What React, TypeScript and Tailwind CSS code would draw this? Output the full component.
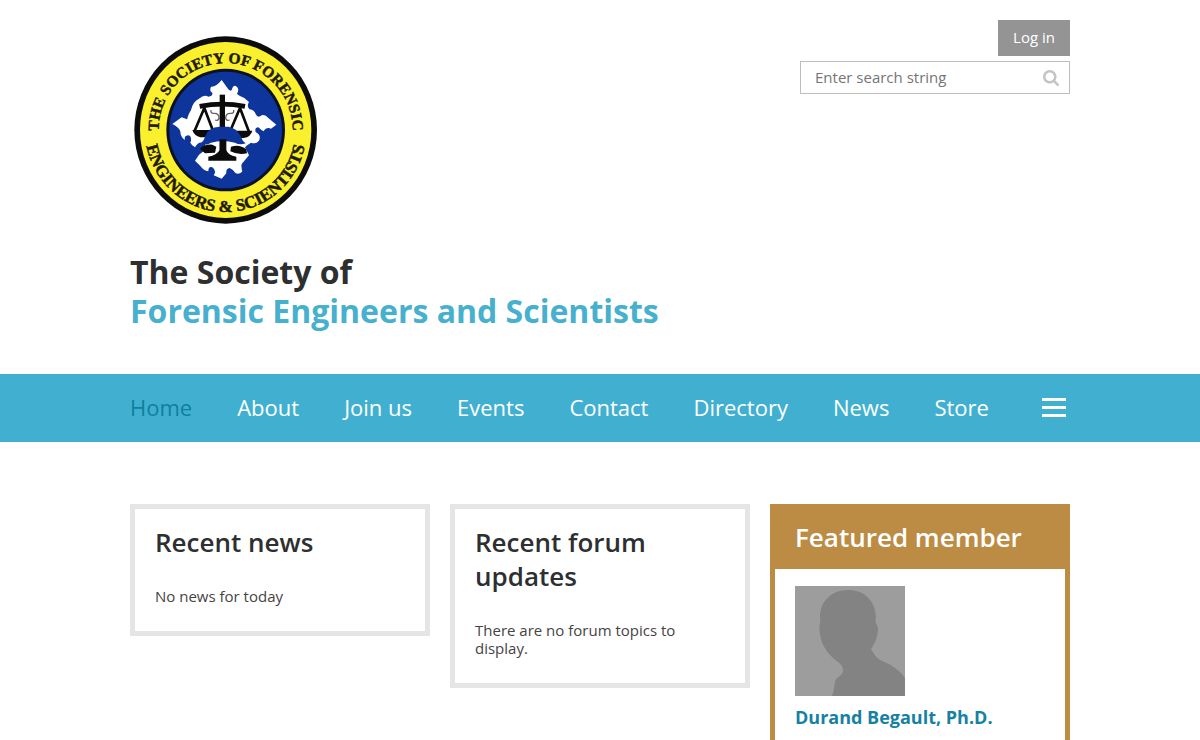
const navItems = ["Home", "About", "Join us", "Events", "Contact", "Directory", "News", "Store"];

function Logo() {
  return (
    <svg viewBox="0 0 600 600" className="block size-[200px]" role="img" aria-label="The Society of Forensic Engineers and Scientists">
      <defs>
        <path id="ring-top" d="M100 330 L101 300 A201 201 0 0 1 503 300 L504 330" />
        <path id="ring-bottom" d="M60 300 A242 246 0 0 0 544 300" />
      </defs>
      <ellipse cx="302" cy="300" rx="274" ry="281" fill="#0c0c0c" />
      <ellipse cx="302" cy="300" rx="257" ry="264" fill="#fbf02d" />
      <ellipse cx="302" cy="300" rx="178" ry="184" fill="#0c1222" />
      <ellipse cx="302" cy="300" rx="169" ry="175" fill="#0d359c" />
      <g fill="#1d1b05" stroke="#1d1b05" strokeWidth="1.5" fontFamily="Liberation Serif, serif" fontWeight="700" textAnchor="middle">
        <text fontSize="46">
          <textPath href="#ring-top" startOffset="50%">THE SOCIETY OF FORENSIC</textPath>
        </text>
        <text fontSize="51">
          <textPath href="#ring-bottom" startOffset="50%">ENGINEERS &amp; SCIENTISTS</textPath>
        </text>
      </g>
      <path
        fill="#fff"
        d="M290 150 L310 178 Q320 188 322 174 Q328 162 337 172 Q343 180 336 192 Q346 200 358 204 L372 216 Q364 228 374 238 Q388 240 392 252 Q398 266 410 256 Q420 252 430 264 L454 284 L438 296 Q424 290 416 304 Q408 300 400 292 Q388 292 392 306 Q410 316 402 332 Q392 344 378 338 Q364 346 360 352 L372 376 L350 402 Q348 412 352 424 Q346 434 332 430 Q324 418 314 414 Q302 416 304 430 L290 446 L266 436 Q276 422 262 412 Q250 408 250 424 Q236 422 226 408 L210 392 L222 374 L240 360 L240 342 Q222 330 210 352 Q200 346 196 338 Q202 322 192 316 Q176 316 180 330 Q166 322 166 304 Q160 290 142 282 L170 262 L186 268 Q190 252 198 240 Q204 214 222 206 Q238 192 250 200 Q264 200 262 188 Q252 184 258 170 Q272 172 290 150 Z"
      />
      <g fill="none" stroke="#0b0b0b" strokeLinejoin="round">
        <path strokeWidth="14" d="M224 229 Q292 216 360 229" />
        <path strokeWidth="8" d="M238 234 L209 302 M238 234 L264 302 M345 234 L316 302 M345 234 L373 308" />
        <path strokeWidth="4" stroke="#60636b" d="M258 240 Q256 252 268 250 Q282 250 282 264 Q280 274 270 270 M326 240 Q328 252 316 250 Q302 250 302 264 Q304 274 314 270" />
      </g>
      <g fill="#0b0b0b">
        <path d="M284 194 H300 V362 H284 Z" />
        <path d="M202 300 H270 Q264 320 240 322 H226 Q208 318 202 300 Z" />
        <path d="M314 302 H382 Q378 320 356 324 H336 Q320 318 314 302 Z" />
        <path d="M224 356 Q240 342 262 344 L274 350 L270 368 L240 370 Z" />
        <path d="M318 350 Q344 342 364 358 L366 370 Q340 376 316 364 Z" />
      </g>
      <path fill="#0d359c" d="M226 342 Q238 332 242 316 Q250 292 284 290 H310 Q336 294 348 320 Q352 334 362 340 Q344 346 330 338 Q292 328 258 338 Q244 348 226 342 Z" />
      <path fill="#0b0b0b" d="M284 328 H304 V360 Q308 376 334 380 V392 H250 V380 Q276 376 284 360 Z" />
    </svg>
  );
}

function SearchIcon() {
  return (
    <svg viewBox="0 0 1664 1664" className="block size-4" fill="#c4c4c4" aria-hidden="true">
      <path d="M1152 704q0-185-131.500-316.500T704 256 387.500 387.500 256 704t131.500 316.500T704 1152t316.500-131.500T1152 704zm512 832q0 52-38 90t-90 38q-54 0-90-38l-343-342q-179 124-399 124-143 0-273.500-55.500t-225-150-150-225T0 704t55.500-273.500 150-225 225-150T704 0t273.500 55.500 225 150 150 225T1408 704q0 220-124 399l343 343q37 37 37 90z" />
    </svg>
  );
}

function Avatar() {
  return (
    <svg viewBox="0 0 110 110" className="block size-[110px]" role="img" aria-label="No photo">
      <path fill="#9d9d9d" d="M0 0 H110 V110 H0 Z" />
      <path
        fill="#838383"
        d="M53 4 C36 4 25 16 25 31 C26 35 24 39 24.500 44 C25 55 30 64 36 70 C42 76 48 78 48 84 C48 91 41 90 40 96 C39 101 39 105 37 110 H110 V92 C104 83 95 78 85 74 C80 71 79 67 76 63 C80 58 83 49 83 43 C83 39 79 36 81 31 C80 14 69 4 53 4 Z"
      />
    </svg>
  );
}

function Header() {
  return (
    <header className="mx-auto flex max-w-[940px] items-start justify-between pb-11">
      <div>
        <div className="-ml-[5px] pt-[30px]">
          <Logo />
        </div>
        <h1 className="mt-[22px] text-[32px] leading-[39px] font-bold text-[#2d2f31]">
          The Society of
          <span className="block text-[#46b0ce]">Forensic Engineers and Scientists</span>
        </h1>
      </div>
      <div className="flex w-[270px] flex-col items-end gap-[5px] pt-5">
        <button type="button" className="h-9 bg-[#949494] px-[15px] pb-0.5 text-[15px] text-white">
          Log in
        </button>
        <form role="search" className="flex h-[33px] w-full items-center border border-[#bdbdbd] pr-2.5 pl-3.5">
          <input
            type="text"
            aria-label="Search"
            placeholder="Enter search string"
            className="min-w-0 flex-1 text-[15px] text-[#666] outline-none placeholder:text-[#757575]"
          />
          <button type="submit" aria-label="Search">
            <SearchIcon />
          </button>
        </form>
      </div>
    </header>
  );
}

function Nav() {
  return (
    <nav className="bg-[#41b0d0]">
      <div className="mx-auto flex h-[68px] max-w-[940px] items-center justify-between pr-1 pb-0.5">
        <div className="flex gap-[45px]">
          {navItems.map((item) => (
            <a key={item} href="#" className={item === "Home" ? "text-[22px] text-[#0e7f9f]" : "text-[22px] text-white"}>
              {item}
            </a>
          ))}
        </div>
        <button type="button" aria-label="More" className="flex w-6 flex-col gap-[5px]">
          <span className="h-[3px] bg-white" />
          <span className="h-[3px] bg-white" />
          <span className="h-[3px] bg-white" />
        </button>
      </div>
    </nav>
  );
}

function Gadget({ title, text }: { title: string; text: string }) {
  return (
    <section className="border-5 border-[#e5e5e5] px-5 pt-4 pb-[26px]">
      <h2 className="text-[26px] leading-[34px] font-semibold text-[#2d2f31]">{title}</h2>
      <p className="mt-7 text-[15px] leading-[18px] text-[#444]">{text}</p>
    </section>
  );
}

export default function App() {
  return (
    <div className="bg-white font-['Open_Sans',sans-serif]">
      <Header />
      <Nav />
      <main className="mx-auto mt-[62px] grid max-w-[940px] grid-cols-3 items-start gap-5">
        <Gadget title="Recent news" text="No news for today" />
        <Gadget title="Recent forum updates" text="There are no forum topics to display." />
        <section className="border-5 border-t-0 border-[#bc8c44]">
          <h2 className="bg-[#bc8c44] px-5 pt-4 pb-[15px] text-[26px] leading-[34px] font-semibold text-white">Featured member</h2>
          <div className="px-5 pt-[17px] pb-5">
            <Avatar />
            <a href="#" className="mt-2 block text-lg leading-[26px] font-bold text-[#1681a3]">
              Durand Begault, Ph.D.
            </a>
          </div>
        </section>
      </main>
    </div>
  );
}
